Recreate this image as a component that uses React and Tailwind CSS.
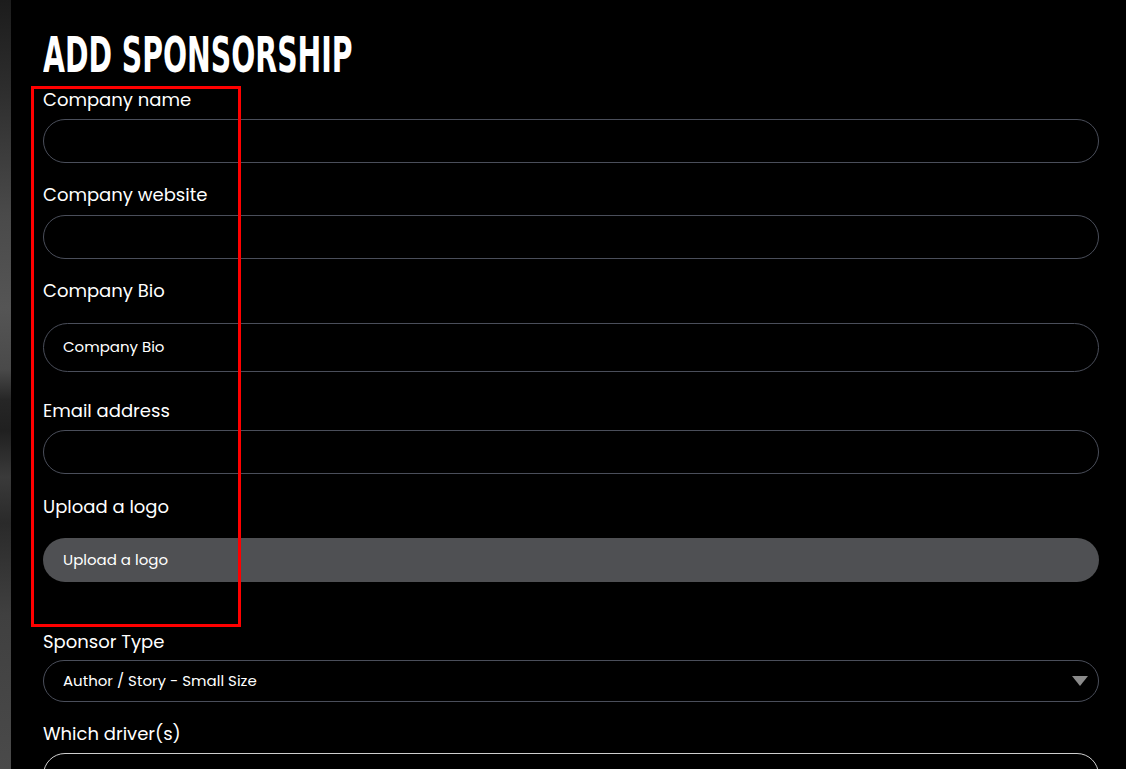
import React from "react";

const labelCls = "block text-[18px] leading-[24px] text-white";
const inputCls = "w-full rounded-full border border-[#4a4e5a] bg-black";

export default function App() {
  return (
    <div className="relative flex h-[769px] w-[1126px] overflow-hidden bg-black" style={{ fontFamily: "'Poppins', 'Inter', 'Noto Sans', sans-serif" }}>
      <div className="w-[11px] shrink-0 bg-[linear-gradient(180deg,#1c1c1c_0%,#2e2e2e_12%,#4a4a4a_28%,#555_40%,#4a4a4a_48%,#262626_52%,#202020_56%,#3a3a3a_62%,#2a2a2a_68%,#404040_80%,#4a4a4a_100%)]" />
      <div className="flex-1 pl-[32px] pr-[27px]">
        <h1
          className="mt-[30px] h-[50px] text-[50px] font-bold uppercase leading-[50px] text-white origin-left scale-x-[0.63] whitespace-nowrap"
          style={{ fontFamily: "'Liberation Sans Narrow', 'DejaVu Sans Condensed', 'Liberation Sans', sans-serif" }}
        >
          ADD SPONSORSHIP
        </h1>
        <div className="mt-[8px]">
          <div className={labelCls}>Company name</div>
          <div className={`mt-[7px] h-[44px] ${inputCls}`} />
        </div>
        <div className="mt-[20px]">
          <div className={labelCls}>Company website</div>
          <div className={`mt-[8px] h-[44px] ${inputCls}`} />
        </div>
        <div className="mt-[20px]">
          <div className={labelCls}>Company Bio</div>
          <div className={`mt-[20px] flex h-[49px] items-center pl-[19px] text-[15px] text-white ${inputCls}`}>Company Bio</div>
        </div>
        <div className="mt-[27px]">
          <div className={labelCls}>Email address</div>
          <div className={`mt-[7px] h-[44px] ${inputCls}`} />
        </div>
        <div className="mt-[21px]">
          <div className={labelCls}>Upload a logo</div>
          <div className="mt-[19px] flex h-[44px] w-full items-center rounded-full bg-[#4f5053] pl-[20px] text-[15px] text-white">Upload a logo</div>
        </div>
        <div className="mt-[48px]">
          <div className={labelCls}>Sponsor Type</div>
          <div className={`mt-[6px] flex h-[42px] items-center justify-between pl-[19px] pr-[10px] text-[15px] text-white ${inputCls}`}>
            <span>Author / Story - Small Size</span>
            <svg width="16" height="11" viewBox="0 0 16 11" className="mt-[1px]">
              <polygon points="0,0 16,0 8,10" fill="#8a8a8a" />
            </svg>
          </div>
        </div>
        <div className="mt-[20px]">
          <div className={labelCls}>Which driver(s)</div>
          <div className="mt-[7px] h-[44px] w-full rounded-full border border-[#cfcfcf] bg-black" />
        </div>
      </div>
      <div className="pointer-events-none absolute left-[31px] top-[86px] h-[541px] w-[210px] border-[3px] border-[#ff0000]" />
    </div>
  );
}
